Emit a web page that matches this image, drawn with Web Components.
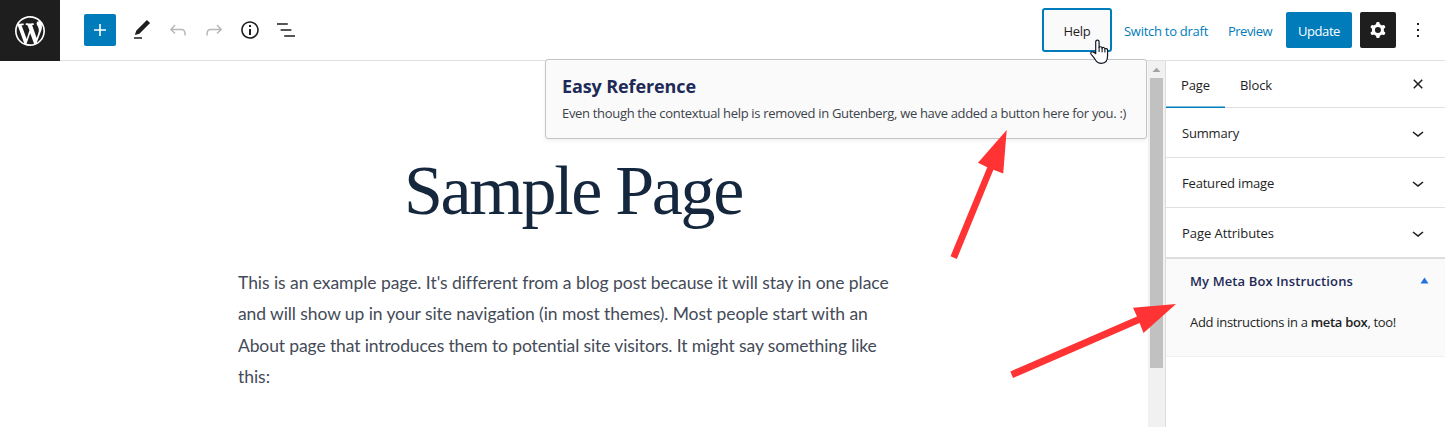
<!DOCTYPE html>
<html lang="en">
<head>
<meta charset="utf-8">
<title>Edit Page</title>
<style>
html,body{margin:0;height:100%;overflow:hidden;background:#fff}
body{font:13px/20px "Open Sans","Noto Sans",sans-serif;color:#1e1e1e}
</style>
</head>
<body>
<page-editor></page-editor>
<script>
const ICONS = {
  wordpress: ['-2 -2 24 24','M20 10c0-5.51-4.49-10-10-10C4.48 0 0 4.49 0 10c0 5.52 4.48 10 10 10 5.51 0 10-4.48 10-10zM7.78 15.37L4.37 6.22c.55-.02 1.17-.08 1.17-.08.5-.06.44-1.13-.06-1.11 0 0-1.45.11-2.37.11-.18 0-.37 0-.58-.01C4.12 2.69 6.87 1.11 10 1.11c2.33 0 4.45.87 6.05 2.34-.68-.11-1.65.39-1.65 1.58 0 .74.45 1.36.9 2.1.35.61.55 1.36.55 2.46 0 1.49-1.4 5-1.4 5l-3.03-8.37c.54-.02.82-.17.82-.17.5-.05.44-1.25-.06-1.22 0 0-1.44.12-2.38.12-.87 0-2.33-.12-2.33-.12-.5-.03-.56 1.2-.06 1.22l.92.08 1.26 3.41zM17.41 10c.24-.64.74-1.87.43-4.25.7 1.29 1.05 2.71 1.05 4.25 0 3.29-1.73 6.24-4.4 7.78.97-2.59 1.94-5.2 2.92-7.78zM6.1 18.09C3.12 16.65 1.11 13.53 1.11 10c0-1.3.23-2.48.72-3.59C3.25 10.3 4.67 14.2 6.1 18.09zm4.03-6.63l2.58 6.98c-.86.29-1.76.45-2.71.45-.79 0-1.57-.11-2.29-.33.81-2.38 1.62-4.74 2.42-7.1z'],
  plus: ['0 0 24 24','M18 11.2h-5.2V6h-1.6v5.2H6v1.6h5.2V18h1.6v-5.2H18z'],
  edit: ['0 0 24 24','M20.1 5.1L16.9 2 6.2 12.7l-1.3 4.4 4.5-1.3L20.1 5.1zM4 20.8h8v-1.5H4v1.5z'],
  undo: ['0 0 24 24','M18.3 11.7c-.6-.6-1.4-.9-2.3-.9H6.7l2.9-3.3-1.1-1-4.5 5L8.5 16l1-1-2.7-2.7H16c.5 0 .9.2 1.3.5 1 1 1 3.4 1 4.5v.3h1.5v-.2c0-1.5 0-4.3-1.5-5.7z'],
  redo: ['0 0 24 24','M15.6 6.5l-1.1 1 2.9 3.3H8c-.9 0-1.7.3-2.3.9-1.4 1.5-1.4 4.2-1.4 5.6v.2h1.5v-.3c0-1.1 0-3.5 1-4.5.3-.3.7-.5 1.3-.5h9.2L14.5 15l1.1 1.1 4.6-4.6-4.6-5z'],
  info: ['0 0 24 24','M12 3.2c-4.8 0-8.8 3.9-8.8 8.8 0 4.8 3.9 8.8 8.8 8.8 4.8 0 8.8-3.9 8.8-8.8 0-4.8-4-8.8-8.8-8.8zm0 16c-4 0-7.2-3.3-7.2-7.2C4.8 8 8 4.8 12 4.8s7.2 3.3 7.2 7.2c0 4-3.2 7.2-7.2 7.2zM11 17h2v-6h-2v6zm0-8h2V7h-2v2z'],
  list: ['0 0 24 24','M13.8 5.2H3v1.5h10.8V5.2zm-3.6 12v1.5H21v-1.5H10.2zm7.2-6H6.6v1.5h10.8v-1.5z'],
  cog: ['0 0 24 24','M10.289 4.836A1 1 0 0111.275 4h1.306a1 1 0 01.987.836l.244 1.466c.787.26 1.503.679 2.108 1.218l1.393-.522a1 1 0 011.216.437l.653 1.13a1 1 0 01-.23 1.273l-1.148.944a6.025 6.025 0 010 2.435l1.149.946a1 1 0 01.23 1.272l-.653 1.13a1 1 0 01-1.216.437l-1.394-.522c-.605.54-1.32.958-2.108 1.218l-.244 1.466a1 1 0 01-.987.836h-1.306a1 1 0 01-.986-.836l-.244-1.466a5.995 5.995 0 01-2.108-1.218l-1.394.522a1 1 0 01-1.217-.436l-.653-1.131a1 1 0 01.23-1.272l1.149-.946a6.026 6.026 0 010-2.435l-1.148-.944a1 1 0 01-.23-1.272l.653-1.131a1 1 0 011.217-.437l1.393.522a5.994 5.994 0 012.108-1.218l.244-1.466zM14.929 12a3 3 0 11-6 0 3 3 0 016 0z'],
  more: ['0 0 24 24','M13 19h-2v-2h2v2zm0-6h-2v-2h2v2zm0-6h-2V5h2v2z'],
  close: ['0 0 24 24','M12 13.06l3.712 3.713 1.061-1.06L13.061 12l3.712-3.712-1.06-1.06L12 10.938 8.288 7.227l-1.061 1.06L10.939 12l-3.712 3.712 1.06 1.061L12 13.061z'],
  chevron: ['0 0 24 24','M17.5 11.6L12 16l-5.5-4.4.9-1.2L12 14l4.5-3.6 1 1.2z']
};
function define(name, html, ready) {
  customElements.define(name, class extends HTMLElement {
    connectedCallback() {
      if (!this.shadowRoot) this.attachShadow({mode: 'open'}).innerHTML = typeof html === 'function' ? html(this) : html;
      if (ready) ready(this);
    }
  });
}

define('ui-icon', el => {
  const [box, d] = ICONS[el.getAttribute('name')];
  const s = el.getAttribute('size') || 24;
  return `<style>:host{display:block;flex:none;width:${s}px;height:${s}px}svg{display:block;fill:currentColor}</style>
  <svg width="${s}" height="${s}" viewBox="${box}"><path fill-rule="evenodd" d="${d}"/></svg>`;
});

/* One line of text, tracked so that it fills the given width. */
define('text-run', `<style>:host{display:block;flex:none;white-space:nowrap}span{display:inline-block}</style><span><slot></slot></span>`, el => {
  const w = +el.getAttribute('w'), span = el.shadowRoot.querySelector('span');
  el.style.width = w + 'px';
  span.style.letterSpacing = '0px';
  const n = el.textContent.length;
  span.style.letterSpacing = ((w - span.getBoundingClientRect().width) / n).toFixed(4) + 'px';
});

define('top-bar', `<style>
:host{display:flex;height:60px;border-bottom:1px solid #e0e0e0;background:#fff;align-items:center;box-sizing:content-box}
.logo{width:60px;height:61px;background:#1e1e1e;color:#fff;display:flex;align-items:flex-start;justify-content:center;align-self:flex-start}
.logo ui-icon{margin-top:12.5px}
.tools{display:flex;align-items:center;gap:12px;margin-left:24px;flex:1}
.add{width:32px;height:32px;border-radius:2px;background:#007cba;color:#fff;display:flex;align-items:center;justify-content:center;margin-right:2px}
.tools .off{color:#b8b8b8}
.actions{display:flex;align-items:center}
.help{box-sizing:border-box;width:70px;height:44px;border:2px solid #007cba;border-radius:3px;background:#fafafa;display:flex;align-items:center;justify-content:center;color:#1e1e1e;padding-top:1px}
.link{color:#007cba;padding-top:2px}
.update{width:66px;height:36px;border-radius:2px;background:#007cba;color:#fff;display:flex;align-items:center;justify-content:center;margin-left:14px;padding-top:2px;box-sizing:border-box;font-weight:500}
.cog{width:36px;height:36px;border-radius:2px;background:#1e1e1e;color:#fff;display:flex;align-items:center;justify-content:center;margin:0 10px 0 8px}
</style>
<div class="logo"><ui-icon name="wordpress" size="36"></ui-icon></div>
<div class="tools"><div class="add"><ui-icon name="plus"></ui-icon></div><ui-icon name="edit"></ui-icon><ui-icon name="undo" class="off"></ui-icon><ui-icon name="redo" class="off"></ui-icon><ui-icon name="info"></ui-icon><ui-icon name="list"></ui-icon></div>
<div class="actions"><div class="help"><text-run w="27">Help</text-run></div>
<text-run class="link" w="84" style="margin-left:12px">Switch to draft</text-run>
<text-run class="link" w="44" style="margin-left:20px">Preview</text-run>
<div class="update"><text-run w="42">Update</text-run></div>
<div class="cog"><ui-icon name="cog"></ui-icon></div><ui-icon name="more" style="margin-right:15px"></ui-icon></div>`);

define('page-canvas', `<style>
:host{display:block;flex:1;min-width:0;padding:88px 0 0 238px;box-sizing:border-box}
h1{margin:0 0 34px 166px;font:400 70px/84px "Liberation Serif",serif;color:#14273d}
p{margin:0;font:400 17.5px/31.4px Lato,sans-serif;color:#444b58}
</style>
<h1><text-run w="338">Sample Page</text-run></h1>
<p><text-run w="650">This is an example page. It's different from a blog post because it will stay in one place</text-run>
<text-run w="630">and will show up in your site navigation (in most themes). Most people start with an</text-run>
<text-run w="639">About page that introduces them to potential site visitors. It might say something like</text-run>
<text-run w="32">this:</text-run></p>`);

define('scroll-bar', `<style>
:host{display:flex;flex-direction:column;align-items:center;width:17px;flex:none;background:#f1f1f1}
svg{display:block;flex:none}
.thumb{width:13px;height:290px;background:#c1c1c1}
</style><svg width="17" height="17"><path d="M4.5 11 8.5 6.8 12.5 11z" fill="#a3a3a3"/></svg><div class="thumb"></div>`);

define('panel-row', `<style>
:host{display:flex;height:49px;border-bottom:1px solid #e0e0e0;padding:0 15px 0 16px;align-items:center;justify-content:space-between;font-weight:500}
</style><slot></slot><ui-icon name="chevron"></ui-icon>`);

define('side-panel', `<style>
:host{display:block;width:279px;flex:none;border-left:1px solid #ddd;background:#fff}
.tabs{display:flex;height:46px;border-bottom:1px solid #e0e0e0;align-items:stretch;font-weight:500}
.tab{display:flex;align-items:center;padding:2px 15px 0 15px}
.on{box-shadow:inset 0 -1.5px 0 #007cba;margin-bottom:-1px;padding-top:1px}
.on text-run{margin-bottom:1px}
.grow{flex:1}
.tabs ui-icon{align-self:center;margin-right:15px}
.meta{border-top:1px solid #ddd;border-bottom:1px solid #f0f0f0;background:#fafafa;height:99px;padding:12px 16px 0 24px;box-sizing:border-box}
.head{display:flex;justify-content:space-between;align-items:center;color:#1d2a57;font-weight:600}
.head svg{margin-bottom:2px}
.body{display:flex;margin-top:21px}
b{font-weight:600}
</style>
<div class="tabs"><div class="tab on"><text-run w="29">Page</text-run></div><div class="tab"><text-run w="32">Block</text-run></div><div class="grow"></div><ui-icon name="close"></ui-icon></div>
<panel-row><text-run w="57">Summary</text-run></panel-row>
<panel-row><text-run w="92">Featured image</text-run></panel-row>
<panel-row><text-run w="92">Page Attributes</text-run></panel-row>
<div class="meta"><div class="head"><text-run w="163">My Meta Box Instructions</text-run><svg width="9" height="7"><path d="M.5 6.5 4.5.5 8.5 6.5z" fill="#2271dd"/></svg></div>
<div class="body"><text-run w="206">Add instructions in a <b>meta box</b>, too!</text-run></div></div>`);

define('help-popover', `<style>
:host{position:absolute;left:545px;top:59px;width:602px;height:80px;box-sizing:border-box;border:1px solid #c3c4c7;border-radius:3px;background:#fafafa;box-shadow:0 2px 4px rgba(0,0,0,.06);padding:14px 16px}
h2{margin:0 0 5px;font-size:18px;line-height:24px;font-weight:700;color:#1d2a57}
p{margin:0;color:#3c434a}
</style><h2><text-run w="134">Easy Reference</text-run></h2><p><text-run w="564">Even though the contextual help is removed in Gutenberg, we have added a button here for you. :)</text-run></p>`);

define('callout-arrows', `<style>:host{position:absolute;left:0;top:0;pointer-events:none}svg{display:block}</style>
<svg width="1445" height="427"><g fill="#ff3333">
<path d="M1006.7 130 1003.2 173.5 993.4 169.8 956.8 259 950.5 256.3 987.3 167.2 978 162.8z"/>
<path d="M1176 304 1143.5 333 1139.6 323 1013 378 1010.4 371.4 1137 316.6 1133 307.8z"/></g>
<path d="M1095.7 53.5V42.2c0-2.7 3.4-2.7 3.4 0v5.2c.4-1 2.6-.9 3 .7.6-1.1 2.6-.7 2.8.8.8-.8 2.7-.4 2.7 1.4v5.2c0 4.7-2.3 7.8-6.1 7.8-3.2 0-4.8-1.2-6.2-3.6-1.3-2.3-3-4-4.3-5.7-.8-1.2.2-2.5 1.7-2.2 1.3.2 2.2 1 3 1.7z" fill="#fff" stroke="#111827" stroke-width="1.2" stroke-linejoin="round"/>
<path d="M1099.1 47v5M1102.1 48v4.3M1104.9 49v3.6" stroke="#111827" stroke-width="1.1" fill="none"/></svg>`);

define('page-editor', `<style>
:host{display:flex;flex-direction:column;position:relative;height:100vh;background:#fff;overflow:hidden}
.main{display:flex;flex:1;min-height:0}
</style><top-bar></top-bar><div class="main"><page-canvas></page-canvas><scroll-bar></scroll-bar><side-panel></side-panel></div><help-popover></help-popover><callout-arrows></callout-arrows>`);
</script>
</body>
</html>
